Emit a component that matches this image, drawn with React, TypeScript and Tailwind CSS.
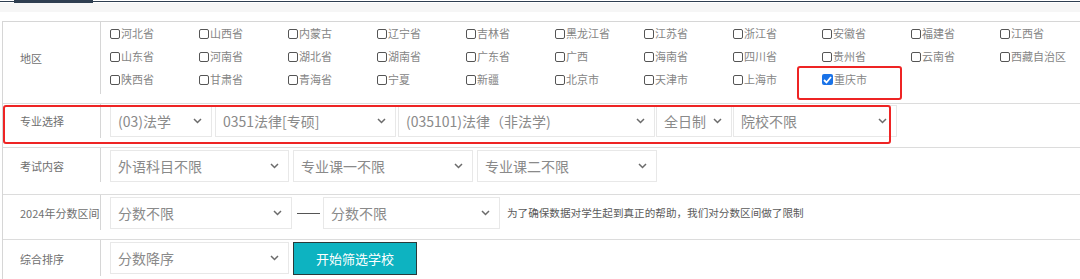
import type { ReactNode } from 'react'

const provinces = [
  ['河北省', '山西省', '内蒙古', '辽宁省', '吉林省', '黑龙江省', '江苏省', '浙江省', '安徽省', '福建省', '江西省'],
  ['山东省', '河南省', '湖北省', '湖南省', '广东省', '广西', '海南省', '四川省', '贵州省', '云南省', '西藏自治区'],
  ['陕西省', '甘肃省', '青海省', '宁夏', '新疆', '北京市', '天津市', '上海市', '重庆市'],
]

function Box({ label, checked }: { label: string; checked?: boolean }) {
  return (
    <label className="flex items-center text-[11px] text-[#858585] leading-none">
      {checked ? (
        <span className="mr-[1px] flex h-[11px] w-[11px] items-center justify-center rounded-[2px] bg-[#1a73e8]">
          <svg width="9" height="8" viewBox="0 0 9 8">
            <polyline points="1,4 3.5,6.5 8,1" fill="none" stroke="#fff" strokeWidth="1.8" />
          </svg>
        </span>
      ) : (
        <span className="mr-[1px] h-[10px] w-[10px] rounded-[2px] border border-[#555] bg-white" />
      )}
      {label}
    </label>
  )
}

function Select({ value, w }: { value: string; w: string }) {
  return (
    <div
      className={`${w} flex h-[32px] shrink-0 items-center justify-between border border-[#e8e8e8] bg-white pl-[7px] pr-[9px] text-[14px] text-[#8a8a8a]`}
    >
      <span className="whitespace-nowrap">{value}</span>
      <svg width="9" height="6" viewBox="0 0 9 6">
        <polyline points="1,1 4.5,4.5 8,1" fill="none" stroke="#6b6b6b" strokeWidth="1.5" />
      </svg>
    </div>
  )
}

function Label({ children, h, pt }: { children: ReactNode; h: string; pt: string }) {
  return (
    <div className={`${h} ${pt} w-[98px] shrink-0 border-r border-[#d6d6d6] pl-[17px] flex items-center text-[11px] text-[#6f6f6f]`}>
      <span className="whitespace-nowrap">{children}</span>
    </div>
  )
}

export default function App() {
  return (
    <div
      className="relative h-[279px] w-[1080px] overflow-hidden bg-white"
      style={{ fontFamily: '"Noto Sans CJK SC", "Microsoft YaHei", sans-serif' }}
    >
      <div className="flex h-[3px] items-start">
        <div className="mt-[1px] h-[1px] w-[14px] bg-[#2e3e50]" />
        <div className="h-[3px] w-[79px] bg-[#2e3e50]" />
        <div className="mt-[1px] h-[1px] flex-1 bg-[#2e3e50]" />
      </div>
      <div className="h-[9px] bg-[#f6f6f6]" />
      <div className="h-[9px]" />

      <div className="ml-[2px] border-l border-t border-[#d6d6d6]">
        {/* 地区 */}
        <div className="flex h-[82px] border-b border-[#dcdcdc]">
          <Label h="h-[72px]" pt="pt-0">地区</Label>
          <div className="pl-[9px]">
            {provinces.map((row, i) => (
              <div key={i} className="grid h-[23px] grid-cols-[repeat(11,89px)] items-center">
                {row.map(p => (
                  <Box key={p} label={p} checked={p === '重庆市'} />
                ))}
              </div>
            ))}
          </div>
        </div>

        {/* 专业选择 */}
        <div className="flex h-[44px] border-b border-[#dcdcdc]">
          <Label h="h-[34px]" pt="pt-[1px]">专业选择</Label>
          <div className="flex pl-[9px] pt-[1px]">
            <Select value="(03)法学" w="w-[102px]" />
            <div className="w-[3px]" />
            <Select value="0351法律[专硕]" w="w-[181px]" />
            <div className="w-[2px]" />
            <Select value="(035101)法律（非法学)" w="w-[257px]" />
            <div className="w-[1px]" />
            <Select value="全日制" w="w-[76px]" />
            <div className="w-[1px]" />
            <Select value="院校不限" w="w-[164px]" />
          </div>
        </div>

        {/* 考试内容 */}
        <div className="flex h-[47px] border-b border-[#dcdcdc]">
          <Label h="h-[34px]" pt="pt-[2px]">考试内容</Label>
          <div className="flex gap-[4px] pl-[9px] pt-[2px]">
            <Select value="外语科目不限" w="w-[179px]" />
            <Select value="专业课一不限" w="w-[180px]" />
            <Select value="专业课二不限" w="w-[180px]" />
          </div>
        </div>

        {/* 分数区间 */}
        <div className="flex h-[45px] border-b border-[#dcdcdc]">
          <Label h="h-[35px]" pt="pt-[2px]">2024年分数区间</Label>
          <div className="flex items-center self-start pl-[9px] pt-[2px]">
            <Select value="分数不限" w="w-[182px]" />
            <div className="ml-[5px] h-[1px] w-[23px] bg-[#555]" />
            <div className="ml-[3px]">
              <Select value="分数不限" w="w-[177px]" />
            </div>
            <span className="ml-[7px] whitespace-nowrap text-[10.6px] text-[#5a5a5a]">
              为了确保数据对学生起到真正的帮助，我们对分数区间做了限制
            </span>
          </div>
        </div>

        {/* 综合排序 */}
        <div className="flex h-[40px]">
          <Label h="h-[36px]" pt="pt-[2px]">综合排序</Label>
          <div className="flex gap-[4px] pl-[9px] pt-[2px]">
            <Select value="分数降序" w="w-[179px]" />
            <button className="h-[33px] w-[124px] border border-[#2a3a3a] bg-[#0db3c1] text-[13px] text-white">
              开始筛选学校
            </button>
          </div>
        </div>
      </div>

      {/* red annotation boxes */}
      <div className="pointer-events-none absolute left-[3px] top-[105px] h-[39px] w-[888px] rounded-[3px] border-[2px] border-[#ee2424]" />
      <div className="pointer-events-none absolute left-[797px] top-[66px] h-[34px] w-[105px] rounded-[3px] border-[2px] border-[#ee2424]" />
    </div>
  )
}
